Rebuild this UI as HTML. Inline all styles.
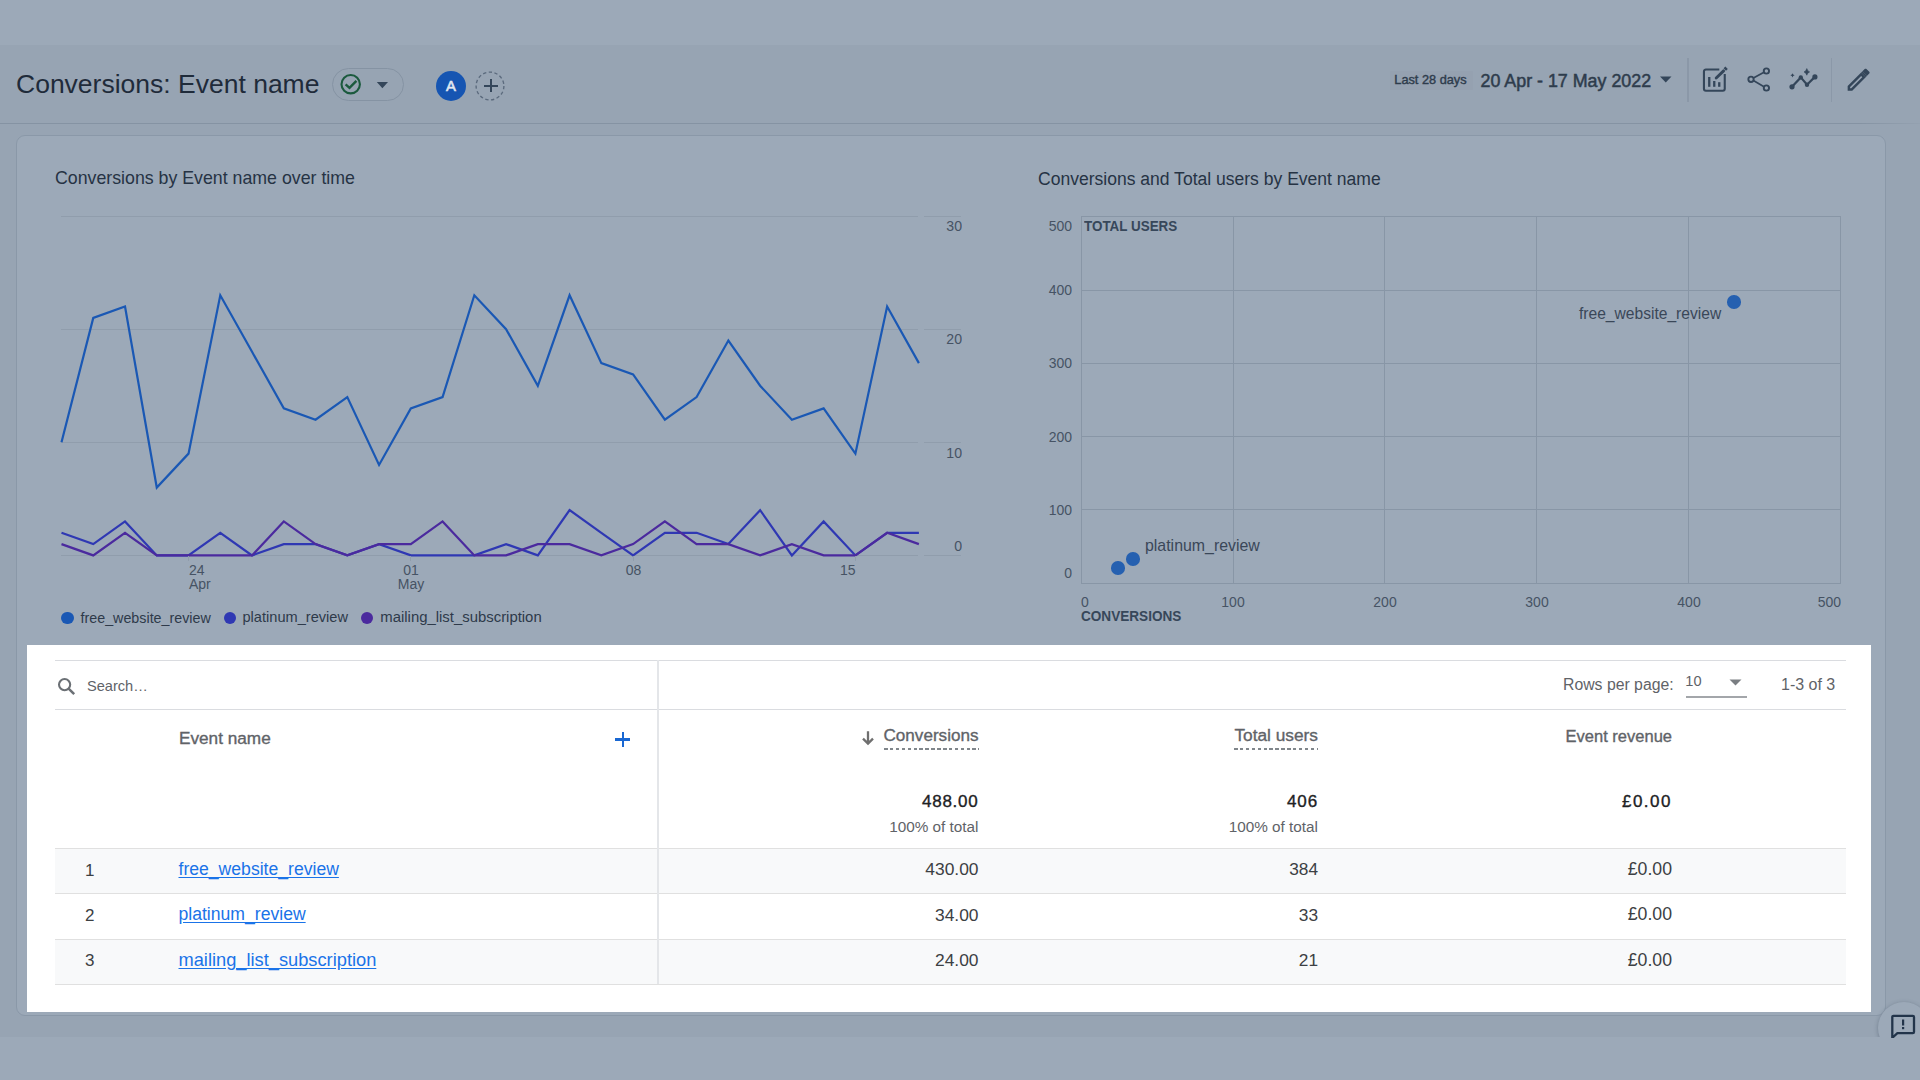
<!DOCTYPE html>
<html><head><meta charset="utf-8"><style>
html,body{margin:0;padding:0;width:1920px;height:1080px;overflow:hidden;font-family:"Liberation Sans", sans-serif;}
.t{position:absolute;white-space:pre;line-height:1;}
</style></head><body>
<div style="position:absolute;left:0px;top:0px;width:1920px;height:1080px;background:#97a4b3"></div>
<div style="position:absolute;left:0px;top:0px;width:1920px;height:45px;background:#9ca9b8"></div>
<div style="position:absolute;left:0px;top:1037px;width:1920px;height:43px;background:#9ca9b8"></div>
<div style="position:absolute;left:0px;top:122.5px;width:1920px;height:1.5px;background:linear-gradient(90deg,#8593a3 0,#8593a3 1860px,#94a1b0 1920px)"></div>
<div style="position:absolute;left:16px;top:135px;width:1869.5px;height:881px;background:#9ca9b8;border:1.2px solid #8a98a8;border-radius:9px;box-sizing:border-box"></div>
<div class="t" style="left:16px;top:70.57px;font-size:26.5px;color:#1f2b3a;font-weight:400;">Conversions: Event name</div>
<div style="position:absolute;left:331.5px;top:67.5px;width:72px;height:33.5px;border:1.3px solid #8593a3;border-radius:17px;box-sizing:border-box"></div>
<svg style="position:absolute;left:338px;top:72px" width="26" height="26" viewBox="0 0 26 26">
<circle cx="12.7" cy="12.2" r="9.2" fill="none" stroke="#1b5a3e" stroke-width="2.1"/>
<path d="M7.6 12.4 L11.5 15.9 L18.4 8.8" fill="none" stroke="#1b5a3e" stroke-width="2.4"/>
</svg>
<svg style="position:absolute;left:376px;top:81px" width="13" height="8" viewBox="0 0 13 8"><path d="M0.8 1 L12 1 L6.4 7.2 Z" fill="#34465a"/></svg>
<div style="position:absolute;left:436px;top:70.5px;width:30px;height:30px;background:#1655b2;border-radius:50%"></div>
<div class="t" style="left:-49px;width:1000px;text-align:center;top:78.77px;font-size:14.8px;color:#e2e8f0;font-weight:400;-webkit-text-stroke:0.6px #e2e8f0">A</div>
<svg style="position:absolute;left:475px;top:70.5px" width="30" height="30" viewBox="0 0 30 30"><circle cx="15" cy="15" r="13.9" fill="none" stroke="#5b6a7d" stroke-width="1.35" stroke-dasharray="3.3 2.5"/></svg>
<div style="position:absolute;left:484px;top:84.5px;width:13.5px;height:2px;background:#34465a"></div>
<div style="position:absolute;left:489.8px;top:78.7px;width:2px;height:13.5px;background:#34465a"></div>
<div style="position:absolute;left:1390px;top:71px;width:82.5px;height:19.2px;background:#95a1b0;border-radius:1px"></div>
<div class="t" style="left:1394.3px;top:74.11px;font-size:12.75px;color:#2e3c4c;font-weight:400;-webkit-text-stroke:0.4px #2e3c4c">Last 28 days</div>
<div class="t" style="left:1480.5px;top:72.79px;font-size:17.85px;color:#2e3c4c;font-weight:400;-webkit-text-stroke:0.5px #2e3c4c">20 Apr - 17 May 2022</div>
<svg style="position:absolute;left:1660px;top:75.5px" width="12" height="7" viewBox="0 0 12 7"><path d="M0 0.5 L11.5 0.5 L5.75 6.5 Z" fill="#34465a"/></svg>
<div style="position:absolute;left:1687px;top:58px;width:1.5px;height:44px;background:#8b98a8"></div>
<div style="position:absolute;left:1830.5px;top:58px;width:1.8px;height:44px;background:#8b98a8"></div>
<svg style="position:absolute;left:1696px;top:62px" width="40" height="36" viewBox="0 0 40 36">
<path d="M23.3 7.55 H10 a2 2 0 0 0 -2.05 2 V26.75 a2 2 0 0 0 2 2 H26.75 a2 2 0 0 0 2 -2 V12" fill="none" stroke="#34465a" stroke-width="2.1"/>
<rect x="12.1" y="15" width="2.3" height="9.8" fill="#34465a"/><rect x="17.1" y="19" width="2.3" height="5.8" fill="#34465a"/><rect x="22.1" y="20.2" width="2.3" height="4.6" fill="#34465a"/>
<path d="M20.2 16 L27.6 8.9" stroke="#34465a" stroke-width="2.9" stroke-linecap="round"/>
<path d="M29.4 6.3 L30 6.9" stroke="#34465a" stroke-width="2.6" stroke-linecap="square"/>
</svg>
<svg style="position:absolute;left:1745px;top:64px" width="30" height="32" viewBox="0 0 30 32">
<circle cx="21.4" cy="7" r="2.65" fill="none" stroke="#34465a" stroke-width="1.9"/>
<circle cx="6" cy="15.3" r="2.65" fill="none" stroke="#34465a" stroke-width="1.9"/>
<circle cx="21.4" cy="24" r="2.65" fill="none" stroke="#34465a" stroke-width="1.9"/>
<path d="M8.4 14 L19 8.3 M8.4 16.6 L19 22.7" stroke="#34465a" stroke-width="1.7"/>
</svg>
<svg style="position:absolute;left:1785px;top:64px" width="36" height="30" viewBox="0 0 36 30">
<path d="M7 22.8 L15.8 13.4 L22 20.7 L29.9 12.9" fill="none" stroke="#34465a" stroke-width="2.2"/>
<circle cx="7" cy="22.8" r="2.6" fill="#34465a"/><circle cx="15.8" cy="13.4" r="2.2" fill="#34465a"/><circle cx="22" cy="20.7" r="2.2" fill="#34465a"/><circle cx="29.9" cy="12.9" r="2.6" fill="#34465a"/>
<path d="M21.8 4.6 Q22.4 7.2 24.6 7.9 Q22.4 8.6 21.8 11.2 Q21.2 8.6 19 7.9 Q21.2 7.2 21.8 4.6 Z" fill="#34465a" stroke="#34465a" stroke-width="0.6"/>
<path d="M7.5 9.2 L8.2 10.6 L9.6 11.3 L8.2 12 L7.5 13.4 L6.8 12 L5.4 11.3 L6.8 10.6 Z" fill="#34465a"/>
</svg>
<svg style="position:absolute;left:1843.8px;top:64.8px" width="29.3" height="29.3" viewBox="0 0 24 24">
<path d="M14.06 6.19 L15.13 5.12 L18.88 8.87 L17.81 9.94 Z" fill="#34465a"/>
<path d="M3 17.25V21h3.75L17.81 9.94l-3.75-3.75L3 17.25zM5.92 19H5v-.92l9.06-9.06.92.92L5.92 19zM20.71 5.63l-2.34-2.34c-.2-.2-.45-.29-.71-.29s-.51.1-.7.29l-1.83 1.83 3.75 3.75 1.83-1.83c.39-.39.39-1.02 0-1.41z" fill="#34465a"/>
</svg>
<div class="t" style="left:55px;top:170.27px;font-size:17.75px;color:#263344;font-weight:400;">Conversions by Event name over time</div>
<div style="position:absolute;left:61px;top:215.5px;width:857px;height:1px;background:#909dac"></div>
<div style="position:absolute;left:924px;top:215.5px;width:37px;height:1px;background:#909dac"></div>
<div class="t" style="left:-38.5px;width:1000px;text-align:right;top:218.23px;font-size:15.2px;color:#465364;font-weight:400;transform:scaleX(0.93);transform-origin:right center;">30</div>
<div style="position:absolute;left:61px;top:328.7px;width:857px;height:1px;background:#909dac"></div>
<div style="position:absolute;left:924px;top:328.7px;width:37px;height:1px;background:#909dac"></div>
<div class="t" style="left:-38.5px;width:1000px;text-align:right;top:331.43px;font-size:15.2px;color:#465364;font-weight:400;transform:scaleX(0.93);transform-origin:right center;">20</div>
<div style="position:absolute;left:61px;top:441.8px;width:857px;height:1px;background:#909dac"></div>
<div style="position:absolute;left:924px;top:441.8px;width:37px;height:1px;background:#909dac"></div>
<div class="t" style="left:-38.5px;width:1000px;text-align:right;top:444.53px;font-size:15.2px;color:#465364;font-weight:400;transform:scaleX(0.93);transform-origin:right center;">10</div>
<div style="position:absolute;left:61px;top:554.9px;width:857px;height:1px;background:#909dac"></div>
<div style="position:absolute;left:924px;top:554.9px;width:37px;height:1px;background:#909dac"></div>
<div class="t" style="left:-38.5px;width:1000px;text-align:right;top:537.63px;font-size:15.2px;color:#465364;font-weight:400;transform:scaleX(0.93);transform-origin:right center;">0</div>
<svg style="position:absolute;left:0;top:0" width="1920" height="1080">
<polyline points="61.50,442.30 93.26,317.89 125.01,306.58 156.77,487.54 188.52,453.61 220.28,295.27 252.03,351.82 283.79,408.37 315.54,419.68 347.30,397.06 379.06,464.92 410.81,408.37 442.57,397.06 474.32,295.27 506.08,329.20 537.83,385.75 569.59,295.27 601.34,363.13 633.10,374.44 664.86,419.68 696.61,397.06 728.37,340.51 760.12,385.75 791.88,419.68 823.63,408.37 855.39,453.61 887.14,306.58 918.90,363.13" fill="none" stroke="#1a58b4" stroke-width="2.2" stroke-linejoin="miter"/>
<polyline points="61.50,532.78 93.26,544.09 125.01,521.47 156.77,555.40 188.52,555.40 220.28,532.78 252.03,555.40 283.79,544.09 315.54,544.09 347.30,555.40 379.06,544.09 410.81,555.40 442.57,555.40 474.32,555.40 506.08,544.09 537.83,555.40 569.59,510.16 601.34,532.78 633.10,555.40 664.86,532.78 696.61,532.78 728.37,544.09 760.12,510.16 791.88,555.40 823.63,521.47 855.39,555.40 887.14,532.78 918.90,532.78" fill="none" stroke="#2f38b3" stroke-width="2.2" stroke-linejoin="miter"/>
<polyline points="61.50,544.09 93.26,555.40 125.01,532.78 156.77,555.40 188.52,555.40 220.28,555.40 252.03,555.40 283.79,521.47 315.54,544.09 347.30,555.40 379.06,544.09 410.81,544.09 442.57,521.47 474.32,555.40 506.08,555.40 537.83,544.09 569.59,544.09 601.34,555.40 633.10,544.09 664.86,521.47 696.61,544.09 728.37,544.09 760.12,555.40 791.88,544.09 823.63,555.40 855.39,555.40 887.14,532.78 918.90,544.09" fill="none" stroke="#4b2a9e" stroke-width="2.2" stroke-linejoin="miter"/>
</svg>
<div style="position:absolute;left:188.02222222222224px;top:555.5px;width:1px;height:5px;background:#909dac"></div>
<div style="position:absolute;left:410.31111111111113px;top:555.5px;width:1px;height:5px;background:#909dac"></div>
<div style="position:absolute;left:632.6px;top:555.5px;width:1px;height:5px;background:#909dac"></div>
<div style="position:absolute;left:854.8888888888889px;top:555.5px;width:1px;height:5px;background:#909dac"></div>
<div class="t" style="left:189px;top:562.55px;font-size:14px;color:#465364;font-weight:400;">24</div>
<div class="t" style="left:189px;top:576.85px;font-size:14px;color:#465364;font-weight:400;">Apr</div>
<div class="t" style="left:-89px;width:1000px;text-align:center;top:562.55px;font-size:14px;color:#465364;font-weight:400;">01</div>
<div class="t" style="left:-89px;width:1000px;text-align:center;top:576.85px;font-size:14px;color:#465364;font-weight:400;">May</div>
<div class="t" style="left:133.5px;width:1000px;text-align:center;top:562.55px;font-size:14px;color:#465364;font-weight:400;">08</div>
<div class="t" style="left:-144.5px;width:1000px;text-align:right;top:562.55px;font-size:14px;color:#465364;font-weight:400;">15</div>
<div style="position:absolute;left:61.3px;top:611.5px;width:12.4px;height:12.4px;background:#1a58b4;border-radius:50%"></div>
<div class="t" style="left:80.5px;top:610.60px;font-size:14.3px;color:#2e3a4a;font-weight:400;">free_website_review</div>
<div style="position:absolute;left:223.5px;top:611.5px;width:12.4px;height:12.4px;background:#2f38b3;border-radius:50%"></div>
<div class="t" style="left:242.5px;top:610.34px;font-size:14.6px;color:#2e3a4a;font-weight:400;">platinum_review</div>
<div style="position:absolute;left:361.1px;top:611.5px;width:12.4px;height:12.4px;background:#4b2a9e;border-radius:50%"></div>
<div class="t" style="left:380.3px;top:610.09px;font-size:14.9px;color:#2e3a4a;font-weight:400;">mailing_list_subscription</div>
<div class="t" style="left:1038px;top:170.54px;font-size:17.55px;color:#263344;font-weight:400;">Conversions and Total users by Event name</div>
<div style="position:absolute;left:1080.8px;top:216.2px;width:760.0px;height:367.50000000000006px;border:1px solid #8896a6;box-sizing:border-box"></div>
<div style="position:absolute;left:1232.6px;top:216.7px;width:1px;height:366.50000000000006px;background:#8896a6"></div>
<div style="position:absolute;left:1081.3px;top:509.40000000000003px;width:759.0px;height:1px;background:#8896a6"></div>
<div style="position:absolute;left:1384.4px;top:216.7px;width:1px;height:366.50000000000006px;background:#8896a6"></div>
<div style="position:absolute;left:1081.3px;top:436.1px;width:759.0px;height:1px;background:#8896a6"></div>
<div style="position:absolute;left:1536.1999999999998px;top:216.7px;width:1px;height:366.50000000000006px;background:#8896a6"></div>
<div style="position:absolute;left:1081.3px;top:362.8px;width:759.0px;height:1px;background:#8896a6"></div>
<div style="position:absolute;left:1688.0px;top:216.7px;width:1px;height:366.50000000000006px;background:#8896a6"></div>
<div style="position:absolute;left:1081.3px;top:289.5px;width:759.0px;height:1px;background:#8896a6"></div>
<div class="t" style="left:71.5px;width:1000px;text-align:right;top:218.13px;font-size:15.2px;color:#465364;font-weight:400;transform:scaleX(0.92);transform-origin:right center;">500</div>
<div class="t" style="left:71.5px;width:1000px;text-align:right;top:282.03px;font-size:15.2px;color:#465364;font-weight:400;transform:scaleX(0.92);transform-origin:right center;">400</div>
<div class="t" style="left:71.5px;width:1000px;text-align:right;top:355.33px;font-size:15.2px;color:#465364;font-weight:400;transform:scaleX(0.92);transform-origin:right center;">300</div>
<div class="t" style="left:71.5px;width:1000px;text-align:right;top:428.63px;font-size:15.2px;color:#465364;font-weight:400;transform:scaleX(0.92);transform-origin:right center;">200</div>
<div class="t" style="left:71.5px;width:1000px;text-align:right;top:501.93px;font-size:15.2px;color:#465364;font-weight:400;transform:scaleX(0.92);transform-origin:right center;">100</div>
<div class="t" style="left:71.5px;width:1000px;text-align:right;top:565.33px;font-size:15.2px;color:#465364;font-weight:400;transform:scaleX(0.92);transform-origin:right center;">0</div>
<div class="t" style="left:1084px;top:218.30px;font-size:15px;color:#37475a;font-weight:700;transform:scaleX(0.895);transform-origin:left center;">TOTAL USERS</div>
<div class="t" style="left:1081.3px;top:593.63px;font-size:15.2px;color:#465364;font-weight:400;transform:scaleX(0.92);transform-origin:left center;">0</div>
<div class="t" style="left:733.0999999999999px;width:1000px;text-align:center;top:593.63px;font-size:15.2px;color:#465364;font-weight:400;transform:scaleX(0.92);transform-origin:center center;">100</div>
<div class="t" style="left:884.9000000000001px;width:1000px;text-align:center;top:593.63px;font-size:15.2px;color:#465364;font-weight:400;transform:scaleX(0.92);transform-origin:center center;">200</div>
<div class="t" style="left:1036.6999999999998px;width:1000px;text-align:center;top:593.63px;font-size:15.2px;color:#465364;font-weight:400;transform:scaleX(0.92);transform-origin:center center;">300</div>
<div class="t" style="left:1188.5px;width:1000px;text-align:center;top:593.63px;font-size:15.2px;color:#465364;font-weight:400;transform:scaleX(0.92);transform-origin:center center;">400</div>
<div class="t" style="left:840.5px;width:1000px;text-align:right;top:593.63px;font-size:15.2px;color:#465364;font-weight:400;transform:scaleX(0.92);transform-origin:right center;">500</div>
<div class="t" style="left:1081px;top:608.30px;font-size:15px;color:#37475a;font-weight:700;transform:scaleX(0.905);transform-origin:left center;">CONVERSIONS</div>
<div style="position:absolute;left:1727.24px;top:294.928px;width:13.6px;height:13.6px;background:#2560b0;border-radius:50%"></div>
<div style="position:absolute;left:1126.112px;top:552.2110000000001px;width:13.6px;height:13.6px;background:#2560b0;border-radius:50%"></div>
<div style="position:absolute;left:1110.932px;top:561.0070000000001px;width:13.6px;height:13.6px;background:#2560b0;border-radius:50%"></div>
<div class="t" style="left:1579px;top:305.79px;font-size:15.6px;color:#3a4758;font-weight:400;">free_website_review</div>
<div class="t" style="left:1145px;top:537.74px;font-size:15.9px;color:#3a4758;font-weight:400;">platinum_review</div>
<div style="position:absolute;left:27px;top:645px;width:1844px;height:367px;background:#ffffff"></div>
<div style="position:absolute;left:55px;top:660px;width:1791px;height:1px;background:#dadce0"></div>
<div style="position:absolute;left:55px;top:709px;width:1791px;height:1px;background:#dadce0"></div>
<div style="position:absolute;left:657px;top:660px;width:2px;height:324px;background:#e4e6e9"></div>
<div style="position:absolute;left:55px;top:848px;width:1791px;height:45px;background:#f8f9fa"></div>
<div style="position:absolute;left:55px;top:939px;width:1791px;height:45px;background:#f8f9fa"></div>
<div style="position:absolute;left:55px;top:847.5px;width:1791px;height:1px;background:#e0e0e0"></div>
<div style="position:absolute;left:55px;top:893px;width:1791px;height:1px;background:#e0e0e0"></div>
<div style="position:absolute;left:55px;top:938.5px;width:1791px;height:1px;background:#e0e0e0"></div>
<div style="position:absolute;left:55px;top:984px;width:1791px;height:1px;background:#e0e0e0"></div>
<div style="position:absolute;left:657px;top:848px;width:2px;height:136px;background:#e4e6e9"></div>
<svg style="position:absolute;left:56px;top:676px" width="22" height="22" viewBox="0 0 22 22">
<circle cx="8.6" cy="8.6" r="5.6" fill="none" stroke="#6b7075" stroke-width="2.1"/>
<path d="M12.6 12.6 L18.2 18.2" stroke="#6b7075" stroke-width="2.5"/>
</svg>
<div class="t" style="left:87px;top:679.24px;font-size:14.6px;color:#5f6368;font-weight:400;">Search…</div>
<div class="t" style="left:1563px;top:677.43px;font-size:15.8px;color:#5f6368;font-weight:400;">Rows per page:</div>
<div class="t" style="left:1685.3px;top:674.24px;font-size:14.6px;color:#5f6368;font-weight:400;">10</div>
<svg style="position:absolute;left:1729px;top:679px" width="13" height="7" viewBox="0 0 13 7"><path d="M0.5 0.5 L12.5 0.5 L6.5 6.5 Z" fill="#7a7e82"/></svg>
<div style="position:absolute;left:1685.5px;top:696.3px;width:61.5px;height:1.4px;background:#a3a6aa"></div>
<div class="t" style="left:1781px;top:677.26px;font-size:16px;color:#5f6368;font-weight:400;">1-3 of 3</div>
<div class="t" style="left:179px;top:729.84px;font-size:17.2px;color:#5f6368;font-weight:400;-webkit-text-stroke:0.35px #5f6368">Event name</div>
<div style="position:absolute;left:615.4px;top:738.3px;width:14.4px;height:2.3px;background:#1967d2"></div>
<div style="position:absolute;left:621.5px;top:732.3px;width:2.5px;height:14.4px;background:#1967d2"></div>
<svg style="position:absolute;left:860px;top:729px" width="16" height="17" viewBox="0 0 16 17"><path d="M8 2.3 V14 M3 9.6 L8 14.6 L13 9.6" fill="none" stroke="#6f6f6f" stroke-width="2.3"/></svg>
<div class="t" style="left:-21.5px;width:1000px;text-align:right;top:727.02px;font-size:17.1px;color:#5f6368;font-weight:400;-webkit-text-stroke:0.35px #5f6368">Conversions</div>
<div style="position:absolute;left:883.5px;top:748px;width:95px;height:1.5px;background:repeating-linear-gradient(90deg,#80868b 0 3.5px,transparent 3.5px 5.9px)"></div>
<div class="t" style="left:318px;width:1000px;text-align:right;top:726.86px;font-size:17.3px;color:#5f6368;font-weight:400;-webkit-text-stroke:0.35px #5f6368">Total users</div>
<div style="position:absolute;left:1233.5px;top:748px;width:84.5px;height:1.5px;background:repeating-linear-gradient(90deg,#80868b 0 3.5px,transparent 3.5px 5.9px)"></div>
<div class="t" style="left:672px;width:1000px;text-align:right;top:727.93px;font-size:16.5px;color:#5f6368;font-weight:400;-webkit-text-stroke:0.35px #5f6368">Event revenue</div>
<div class="t" style="left:-21.5px;width:1000px;text-align:right;top:792.61px;font-size:17px;color:#202124;font-weight:400;letter-spacing:0.75px;-webkit-text-stroke:0.35px #202124">488.00</div>
<div class="t" style="left:318px;width:1000px;text-align:right;top:792.61px;font-size:17px;color:#202124;font-weight:400;letter-spacing:0.9px;-webkit-text-stroke:0.35px #202124">406</div>
<div class="t" style="left:672px;width:1000px;text-align:right;top:792.91px;font-size:17px;color:#202124;font-weight:400;letter-spacing:1.5px;-webkit-text-stroke:0.35px #202124">£0.00</div>
<div class="t" style="left:-21.5px;width:1000px;text-align:right;top:819.45px;font-size:15.3px;color:#5f6368;font-weight:400;">100% of total</div>
<div class="t" style="left:318px;width:1000px;text-align:right;top:819.45px;font-size:15.3px;color:#5f6368;font-weight:400;">100% of total</div>
<div class="t" style="left:85px;top:861.51px;font-size:17px;color:#3c4043;font-weight:400;">1</div>
<div class="t" style="left:178.5px;top:861.00px;font-size:17.6px;color:#1a73e8;font-weight:400;text-decoration:underline;text-underline-offset:2px">free_website_review</div>
<div class="t" style="left:-21.5px;width:1000px;text-align:right;top:861.17px;font-size:17.4px;color:#3c4043;font-weight:400;">430.00</div>
<div class="t" style="left:318px;width:1000px;text-align:right;top:861.26px;font-size:17.3px;color:#3c4043;font-weight:400;">384</div>
<div class="t" style="left:672px;width:1000px;text-align:right;top:860.92px;font-size:17.7px;color:#3c4043;font-weight:400;">£0.00</div>
<div class="t" style="left:85px;top:906.91px;font-size:17px;color:#3c4043;font-weight:400;">2</div>
<div class="t" style="left:178.5px;top:906.40px;font-size:17.6px;color:#1a73e8;font-weight:400;text-decoration:underline;text-underline-offset:2px">platinum_review</div>
<div class="t" style="left:-21.5px;width:1000px;text-align:right;top:906.57px;font-size:17.4px;color:#3c4043;font-weight:400;">34.00</div>
<div class="t" style="left:318px;width:1000px;text-align:right;top:906.66px;font-size:17.3px;color:#3c4043;font-weight:400;">33</div>
<div class="t" style="left:672px;width:1000px;text-align:right;top:906.32px;font-size:17.7px;color:#3c4043;font-weight:400;">£0.00</div>
<div class="t" style="left:85px;top:952.31px;font-size:17px;color:#3c4043;font-weight:400;">3</div>
<div class="t" style="left:178.5px;top:951.25px;font-size:18.25px;color:#1a73e8;font-weight:400;text-decoration:underline;text-underline-offset:2px">mailing_list_subscription</div>
<div class="t" style="left:-21.5px;width:1000px;text-align:right;top:951.97px;font-size:17.4px;color:#3c4043;font-weight:400;">24.00</div>
<div class="t" style="left:318px;width:1000px;text-align:right;top:952.06px;font-size:17.3px;color:#3c4043;font-weight:400;">21</div>
<div class="t" style="left:672px;width:1000px;text-align:right;top:951.72px;font-size:17.7px;color:#3c4043;font-weight:400;">£0.00</div>
<div style="position:absolute;left:1878px;top:1002px;width:52px;height:52px;background:#9ca9b8;border-radius:50%;box-shadow:0 1px 4px rgba(40,55,75,0.35)"></div>
<div style="position:absolute;left:0px;top:1037px;width:1920px;height:43px;background:#9ca9b8"></div>
<svg style="position:absolute;left:1888px;top:1012px" width="30" height="26" viewBox="0 0 30 26">
<path d="M4.3 26 V5 a1.2 1.2 0 0 1 1.2 -1.2 H24.8 a1.2 1.2 0 0 1 1.2 1.2 V20 a1.2 1.2 0 0 1 -1.2 1.2 H9.4 L4.3 25.8" fill="none" stroke="#22344a" stroke-width="2.3" stroke-linejoin="round"/>
<rect x="14" y="7.5" width="2.2" height="6" fill="#22344a"/><rect x="14" y="15" width="2.2" height="2.2" fill="#22344a"/>
</svg>
</body></html>
